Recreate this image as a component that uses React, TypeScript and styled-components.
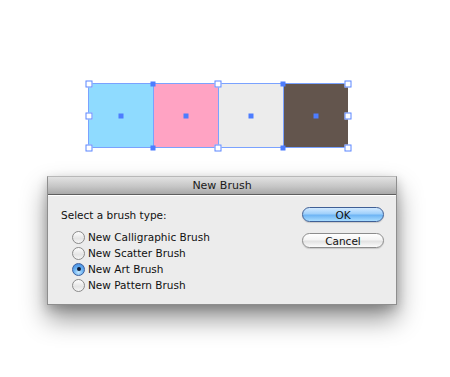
import React from "react";
import styled, { createGlobalStyle, css } from "styled-components";

const Global = createGlobalStyle`
  html, body { margin: 0; padding: 0; background: #ffffff; }
  body { font-family: "DejaVu Sans", "Liberation Sans", sans-serif; }
`;

const Page = styled.div`
  width: 450px;
  height: 377px;
  overflow: hidden;
  display: flex;
  flex-direction: column;
  background: #ffffff;
`;

const Canvas = styled.div`
  padding: 83px 0 0 88px;
  display: flex;
`;

const Group = styled.div`
  position: relative;
  display: flex;
`;

const Swatch = styled.div<{ $fill: string }>`
  width: 65px;
  height: 65px;
  box-sizing: border-box;
  background: ${(p) => p.$fill};
  border: 1px solid #7aa2ff;
  border-right: none;
  &:last-of-type { border-right: 1px solid #7aa2ff; width: 65px; }
`;

const Handle = styled.div<{ $filled?: boolean }>`
  position: absolute;
  box-sizing: border-box;
  transform: translate(-50%, -50%);
  ${(p) =>
    p.$filled
      ? css`
          width: 5px;
          height: 5px;
          background: #4d7dff;
        `
      : css`
          width: 7px;
          height: 7px;
          background: #ffffff;
          border: 1px solid #5b86ff;
        `}
`;

const DialogWrap = styled.div`
  margin-top: 28px;
  padding-left: 47px;
  display: flex;
`;

const Dialog = styled.div`
  width: 350px;
  height: 129px;
  box-sizing: border-box;
  border: 1px solid #8e8e8e;
  border-top-color: #b8b8b8;
  background: #ececec;
  box-shadow: 0 14px 24px rgba(0, 0, 0, 0.42), 0 4px 10px rgba(0, 0, 0, 0.2);
  display: flex;
  flex-direction: column;
`;

const TitleBar = styled.div`
  height: 17px;
  flex: 0 0 17px;
  background: linear-gradient(#e2e2e2, #c6c6c6 55%, #a9a9a9);
  border-bottom: 1px solid #5e5e5e;
  box-shadow: 0 1px 0 #ffffff;
  display: flex;
  align-items: center;
  justify-content: center;
  font-size: 11px;
  color: #1a1a1a;
`;

const Body = styled.div`
  flex: 1;
  display: flex;
  justify-content: space-between;
  padding: 13px 12px 0 13px;
`;

const LeftCol = styled.div`
  display: flex;
  flex-direction: column;
`;

const Label = styled.div`
  font-size: 10.5px;
  line-height: 14px;
  color: #111;
`;

const RadioList = styled.div`
  display: flex;
  flex-direction: column;
  margin-top: 7px;
  padding-left: 11px;
`;

const RadioRow = styled.label`
  display: flex;
  align-items: center;
  height: 16px;
  gap: 3px;
  font-size: 10.5px;
  color: #111;
`;

const RadioDot = styled.span<{ $on?: boolean }>`
  width: 13px;
  height: 13px;
  box-sizing: border-box;
  border-radius: 50%;
  display: flex;
  align-items: center;
  justify-content: center;
  ${(p) =>
    p.$on
      ? css`
          border: 1px solid #3d5f9c;
          background: radial-gradient(circle at 50% 75%, #c4e8ff 0%, #6bb2f2 45%, #3b82dc 100%);
          &::after {
            content: "";
            width: 4px;
            height: 4px;
            border-radius: 50%;
            background: #0d1a33;
          }
        `
      : css`
          border: 1px solid #8a8a8a;
          background: linear-gradient(#fdfdfd, #e4e4e4 60%, #f6f6f6);
        `}
`;

const RightCol = styled.div`
  display: flex;
  flex-direction: column;
  gap: 11px;
  margin-top: -1px;
`;

const Button = styled.div<{ $primary?: boolean }>`
  width: 82px;
  height: 15px;
  box-sizing: border-box;
  border-radius: 8px;
  display: flex;
  align-items: center;
  justify-content: center;
  font-size: 10.5px;
  color: #111;
  box-shadow: 0 1px 1px rgba(0, 0, 0, 0.15);
  ${(p) =>
    p.$primary
      ? css`
          border: 1px solid #3f5f95;
          background: linear-gradient(#d2e9ff 0%, #9fd0fb 45%, #6db4f4 55%, #a8dcff 100%);
        `
      : css`
          border: 1px solid #8c8c8c;
          background: linear-gradient(#ffffff 0%, #f4f4f4 45%, #e2e2e2 55%, #fbfbfb 100%);
        `}
`;

const swatches = ["#8fdbff", "#ffa3c3", "#ececec", "#63554d"];

const W = 259.5;
const H = 64.5;
const openHandles: [number, number][] = [
  [0, 0], [129.5, 0], [W, 0],
  [0, 32.5], [W, 32.5],
  [0, H], [129.5, H], [W, H],
];
const filledHandles: [number, number][] = [
  [64.5, 0], [194.5, 0], [64.5, H], [194.5, H],
  [32.5, 32.5], [97.5, 32.5], [162.5, 32.5], [227.5, 32.5],
];

const brushes = [
  "New Calligraphic Brush",
  "New Scatter Brush",
  "New Art Brush",
  "New Pattern Brush",
];

export default function App() {
  return (
    <Page>
      <Global />
      <Canvas>
        <Group>
          {swatches.map((c) => (
            <Swatch key={c} $fill={c} />
          ))}
          {openHandles.map(([x, y], i) => (
            <Handle key={"o" + i} style={{ left: x + 0.5, top: y + 0.5 }} />
          ))}
          {filledHandles.map(([x, y], i) => (
            <Handle key={"f" + i} $filled style={{ left: x + 0.5, top: y + 0.5 }} />
          ))}
        </Group>
      </Canvas>
      <DialogWrap>
        <Dialog>
          <TitleBar>New Brush</TitleBar>
          <Body>
            <LeftCol>
              <Label>Select a brush type:</Label>
              <RadioList>
                {brushes.map((b) => (
                  <RadioRow key={b}>
                    <RadioDot $on={b === "New Art Brush"} />
                    {b}
                  </RadioRow>
                ))}
              </RadioList>
            </LeftCol>
            <RightCol>
              <Button $primary>OK</Button>
              <Button>Cancel</Button>
            </RightCol>
          </Body>
        </Dialog>
      </DialogWrap>
    </Page>
  );
}
